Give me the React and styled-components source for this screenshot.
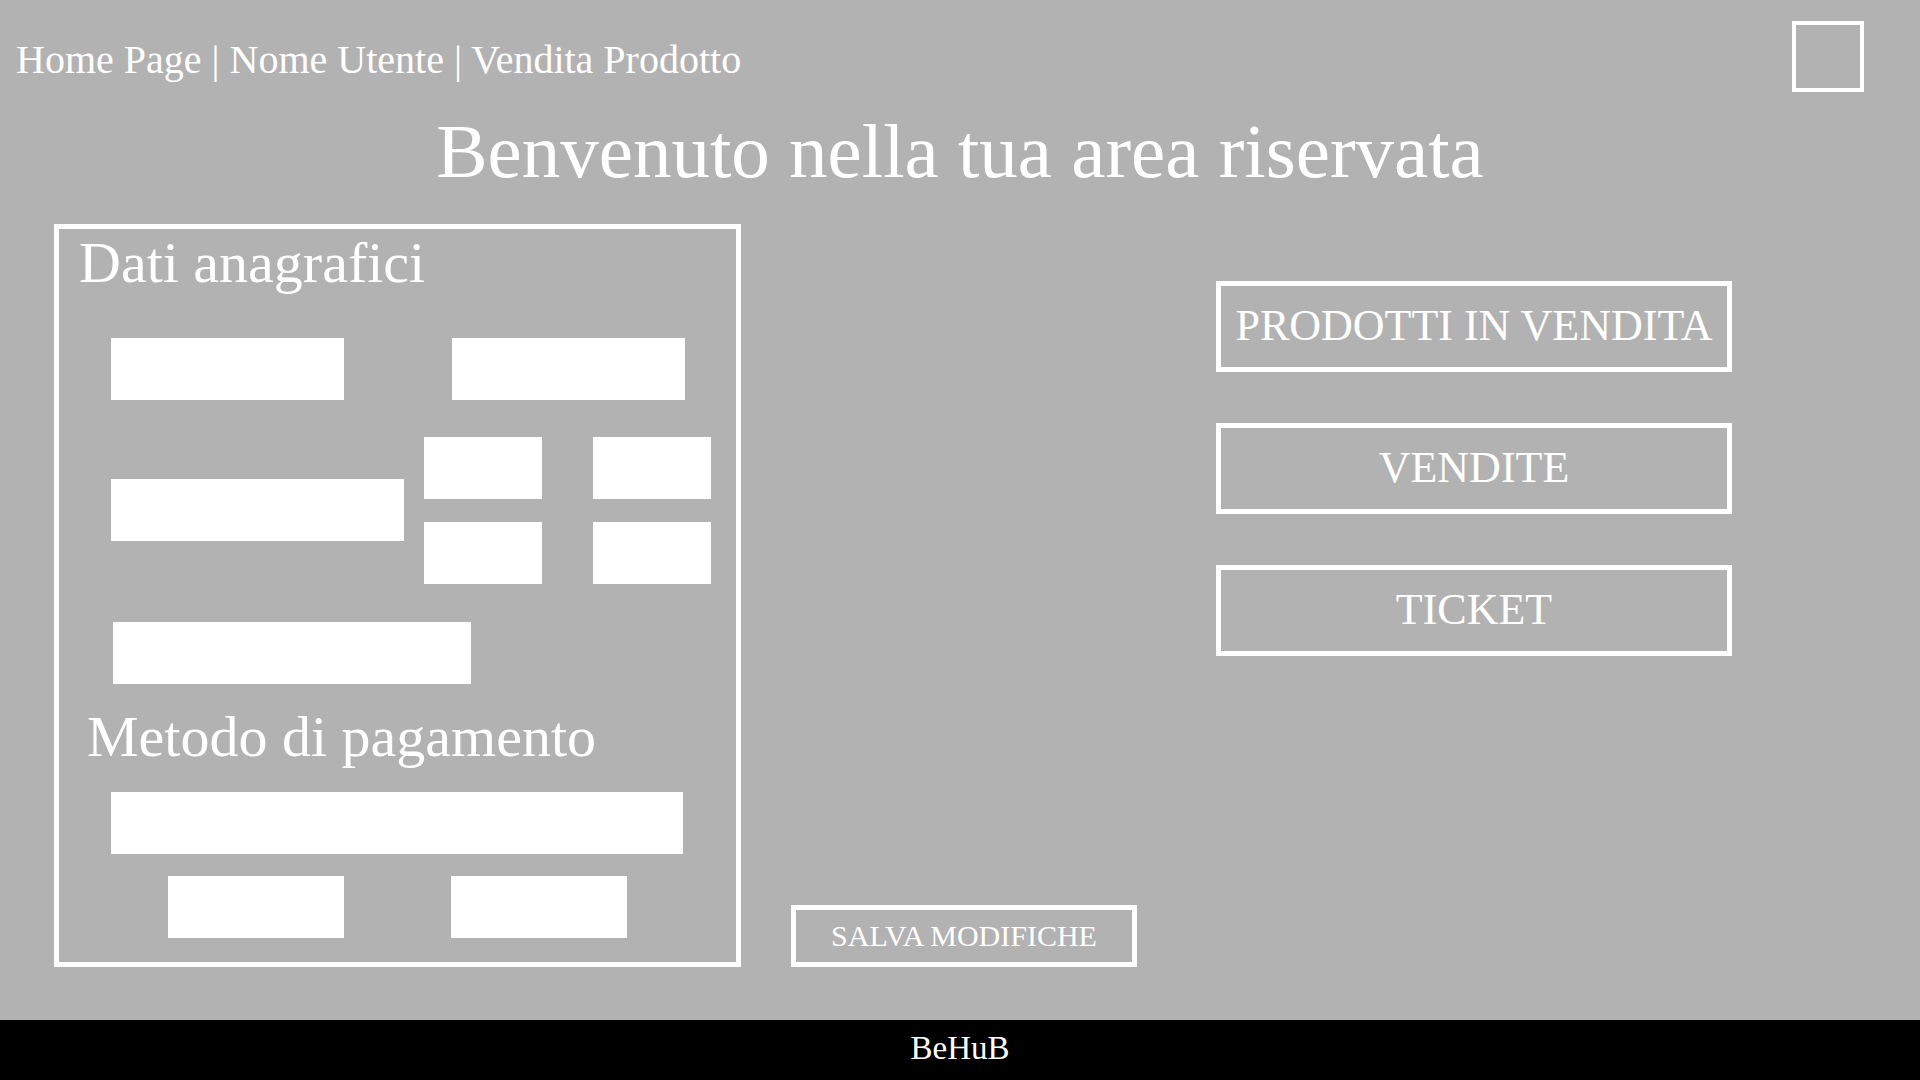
import styled, { createGlobalStyle } from 'styled-components';

// Note: Cont is short for Container
const GlobalStyle = createGlobalStyle`
  html, body {
    margin: 0;
    padding: 0;
  }

  body {
    background: #b2b2b2;
    font-family: "Liberation Serif", "Times New Roman", serif;
    color: #fff;
  }

  * {
    box-sizing: border-box;
  }
`;

const PageCont = styled.div`
  display: flex;
  flex-direction: column;
  min-height: 100vh;
  background: #b2b2b2;
`;

const Header = styled.header`
  display: flex;
  justify-content: space-between;
  align-items: flex-start;
  padding: 21px 56px 0 16px;
`;

const Breadcrumb = styled.nav`
  margin-top: 18.5px;
  font-size: 40px;
  line-height: 1;
  white-space: nowrap;
`;

const ProfileBox = styled.div`
  width: 72px;
  height: 71px;
  border: 4px solid #fff;
`;

const Title = styled.h1`
  margin: 21px 0 33.5px;
  font-size: 77px;
  font-weight: normal;
  line-height: 1;
  text-align: center;
`;

const Main = styled.main`
  display: flex;
  align-items: stretch;
  padding-left: 54px;
`;

const Panel = styled.section`
  display: flex;
  flex-direction: column;
  width: 687px;
  height: 743px;
  padding-top: 5px;
  border: 5px solid #fff;
`;

const SectionTitle = styled.h2`
  margin: ${({ $top }) => $top}px 0 0 ${({ $left }) => $left}px;
  font-size: 58px;
  font-weight: normal;
  line-height: 1;
  white-space: nowrap;
`;

const Row = styled.div`
  display: flex;
  align-items: center;
  gap: ${({ $gap }) => $gap || 0}px;
  margin: ${({ $top }) => $top}px 0 0 ${({ $left }) => $left}px;
`;

const Field = styled.div`
  width: ${({ $w }) => $w}px;
  height: 62px;
  background: #fff;
`;

const SmallGrid = styled.div`
  display: grid;
  grid-template-columns: 118px 118px;
  column-gap: 51px;
  row-gap: 23px;
`;

const SaveCont = styled.div`
  display: flex;
  align-items: flex-end;
  margin-left: 50px;
`;

const SaveButton = styled.button`
  display: flex;
  align-items: center;
  justify-content: center;
  width: 346px;
  height: 62px;
  padding: 0;
  border: 5px solid #fff;
  background: transparent;
  color: #fff;
  font-family: "Liberation Serif", "Times New Roman", serif;
  font-size: 30px;
  line-height: 1;
  white-space: nowrap;
`;

const MenuCont = styled.div`
  display: flex;
  flex-direction: column;
  gap: 51px;
  margin-left: 79px;
  padding-top: 57px;
`;

const MenuButton = styled.button`
  display: flex;
  align-items: center;
  justify-content: center;
  width: 516px;
  height: 91px;
  padding: 0;
  border: 5px solid #fff;
  background: transparent;
  color: #fff;
  font-family: "Liberation Serif", "Times New Roman", serif;
  font-size: 44px;
  line-height: 1;
  white-space: nowrap;
`;

const Footer = styled.footer`
  display: flex;
  align-items: center;
  justify-content: center;
  height: 60px;
  margin-top: auto;
  padding-bottom: 4px;
  background: #000;
  color: #fff;
  font-size: 33px;
  line-height: 1;
`;

export default function App() {
  return (
    <PageCont>
      <GlobalStyle />
      <Header>
        <Breadcrumb>Home Page | Nome Utente | Vendita Prodotto</Breadcrumb>
        <ProfileBox />
      </Header>

      <Title>Benvenuto nella tua area riservata</Title>

      <Main>
        <Panel>
          <SectionTitle $top={0} $left={20}>Dati anagrafici</SectionTitle>
          <Row $top={46} $left={52} $gap={108}>
            <Field $w={233} />
            <Field $w={233} />
          </Row>
          <Row $top={37} $left={52} $gap={20}>
            <Field $w={293} />
            <SmallGrid>
              <Field $w={118} />
              <Field $w={118} />
              <Field $w={118} />
              <Field $w={118} />
            </SmallGrid>
          </Row>
          <Row $top={38} $left={54}>
            <Field $w={358} />
          </Row>

          <SectionTitle $top={24} $left={28}>Metodo di pagamento</SectionTitle>
          <Row $top={26} $left={52}>
            <Field $w={572} />
          </Row>
          <Row $top={22} $left={109} $gap={107}>
            <Field $w={176} />
            <Field $w={176} />
          </Row>
        </Panel>

        <SaveCont>
          <SaveButton>SALVA MODIFICHE</SaveButton>
        </SaveCont>

        <MenuCont>
          <MenuButton>PRODOTTI IN VENDITA</MenuButton>
          <MenuButton>VENDITE</MenuButton>
          <MenuButton>TICKET</MenuButton>
        </MenuCont>
      </Main>

      <Footer>BeHuB</Footer>
    </PageCont>
  );
}
